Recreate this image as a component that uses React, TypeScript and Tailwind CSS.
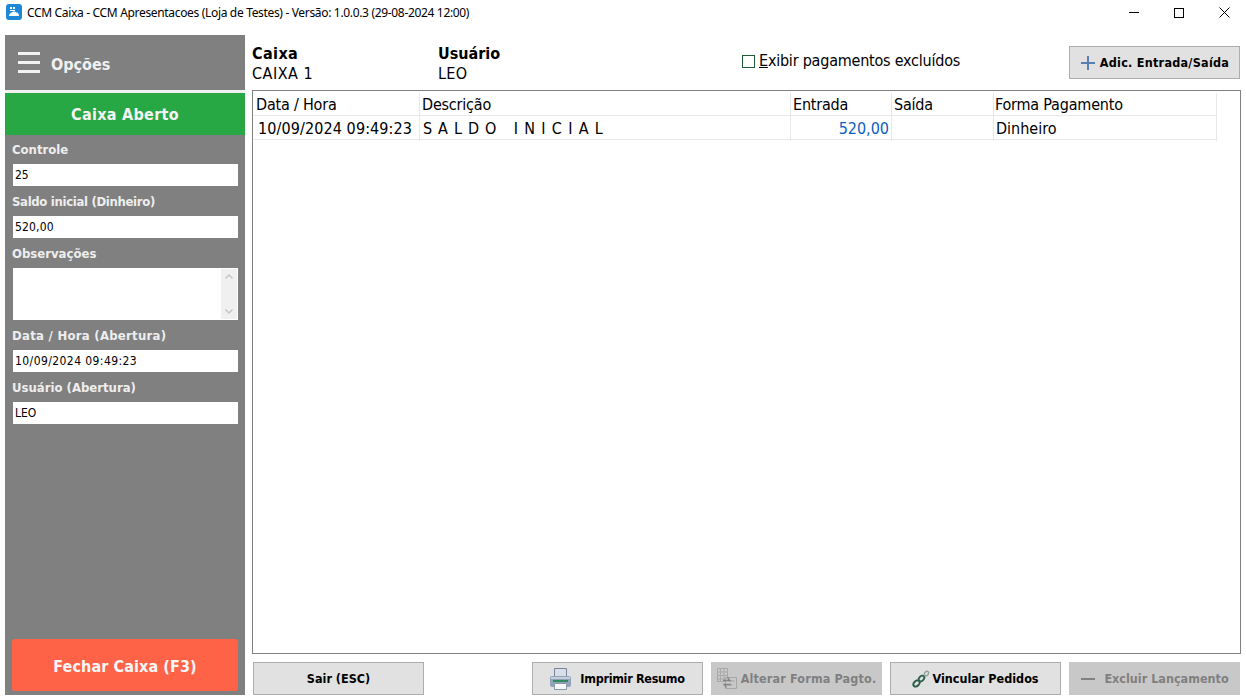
const font = "[font-family:'DejaVu_Sans_Condensed','DejaVu_Sans',sans-serif]"
const columns = 'grid w-[963px] grid-cols-[166px_371px_101px_102px_223px]'

function Field({
  label,
  value,
  labelClass,
  valueClass,
}: {
  label: string
  value: string
  labelClass?: string
  valueClass?: string
}) {
  return (
    <div className="flex flex-col">
      <div className={`h-[30px] pl-[7px] pt-[6px] text-[13px] font-bold leading-[20px] text-[#eeeeee] ${labelClass ?? ''}`}>
        {label}
      </div>
      <div className={`ml-[8px] mr-[7px] h-[22px] bg-white pl-[2px] text-[12px] leading-[22px] text-black ${valueClass ?? ''}`}>
        {value}
      </div>
    </div>
  )
}

function PrinterIcon() {
  return (
    <svg width="21" height="24" viewBox="0 0 21 24" className="shrink-0">
      <path d="M4.5 1.5h12v8h-12z" fill="#d9dee8" stroke="#75849b" />
      <path d="M2 9h17a2 2 0 0 1 2 2v7a2 2 0 0 1-2 2H2a2 2 0 0 1-2-2v-7a2 2 0 0 1 2-2z" fill="#93a3ba" />
      <path d="M1 10h19v2H1z" fill="#c6cfdc" />
      <path d="M3 13h15v2H3z" fill="#2f8a62" />
      <path d="M4.5 16.5h12v6h-12z" fill="#f5f7f9" stroke="#8a97aa" />
    </svg>
  )
}

function SwapIcon() {
  return (
    <svg width="20" height="22" viewBox="0 0 20 22" className="shrink-0" fill="none">
      <path d="M.5.5h10v13H.5zM3.5.5v13M7 .5v13M.5 4h10M.5 7.5h10M.5 11h10" stroke="#a9a9a9" />
      <path d="M8.5 9.5h11v11h-11z" fill="#c8c8c8" stroke="#a6a6a6" />
      <path d="M11.5 13h6M15.5 17h-6" stroke="#a6a6a6" />
      <path d="M6 12.5h7l-2.5-3M14 16.5H7l2.5 3" stroke="#858585" strokeWidth="1.3" />
    </svg>
  )
}

function LinkIcon() {
  return (
    <svg width="18" height="18" viewBox="0 0 18 18" className="shrink-0" fill="none">
      <ellipse cx="4.5" cy="13.5" rx="3.5" ry="2.5" transform="rotate(-45 4.5 13.5)" stroke="#2c5c48" strokeWidth="1.9" />
      <ellipse cx="9.5" cy="8.5" rx="3.2" ry="2.3" transform="rotate(-45 9.5 8.5)" stroke="#2f6450" strokeWidth="1.9" />
      <ellipse cx="14.5" cy="3.5" rx="2.4" ry="1.9" transform="rotate(-45 14.5 3.5)" stroke="#8da398" strokeWidth="1.4" />
    </svg>
  )
}

function FooterButton({
  children,
  disabled,
  className,
}: {
  children: React.ReactNode
  disabled?: boolean
  className?: string
}) {
  return (
    <div
      className={`flex h-[33px] w-[171px] items-center justify-center border pt-px text-[12.5px] font-bold ${
        disabled
          ? 'border-[#c8c8c8] bg-[#c8c8c8] text-[#808080]'
          : 'border-[#adadad] bg-[#e1e1e1] text-black'
      } ${className ?? ''}`}
    >
      {children}
    </div>
  )
}

export default function App() {
  return (
    <div className={`flex h-[700px] w-[1246px] flex-col overflow-hidden bg-white ${font}`}>
      {/* title bar */}
      <div className="flex h-[35px] shrink-0 items-start">
        <div className="ml-[6px] mt-[4px] flex h-[16px] w-[16px] items-center justify-center rounded-[3px] bg-[#1e88d8]">
          <svg width="12" height="12" viewBox="0 0 12 12">
            <path d="M2 1h2v2H2zM5 1h2v2H5zM2 4h5v1H2z" fill="#ffffff" />
            <path d="M1 10c0-2 1.5-3.5 3-3.5.5-1 3-1.5 4.5 0 1.5 0 2.5 1.5 2.5 3.5z" fill="#ffffff" />
          </svg>
        </div>
        <div className="ml-[5px] mt-[4px] font-['Noto_Sans'] text-[12px] leading-[17px] tracking-[-0.33px] text-black">
          CCM Caixa - CCM Apresentacoes (Loja de Testes) - Versão: 1.0.0.3 (29-08-2024 12:00)
        </div>
        <div className="ml-auto flex items-center pr-[16px] pt-[7px]">
          <div className="h-px w-[10px] bg-black" />
          <div className="ml-[35px] h-[10px] w-[10px] border border-black" />
          <svg width="11" height="11" viewBox="0 0 11 11" className="ml-[35px]">
            <path d="M.5.5l10 10M10.5.5l-10 10" stroke="#000" fill="none" />
          </svg>
        </div>
      </div>

      <div className="flex min-h-0 flex-1 pb-[5px] pl-[5px]">
        {/* side panel */}
        <div className="flex w-[240px] shrink-0 flex-col bg-[#808080]">
          <div className="flex h-[55px] items-center gap-[11px] pl-[13px]">
            <div className="flex w-[22px] flex-col gap-[6px]">
              <div className="h-[3px] bg-[#f2f2f2]" />
              <div className="h-[3px] bg-[#f2f2f2]" />
              <div className="h-[3px] bg-[#f2f2f2]" />
            </div>
            <span className="pt-[5px] text-[16px] font-bold text-[#f0f0f0]">Opções</span>
          </div>
          <div className="h-[3px] bg-[#f0f0f0]" />
          <div className="flex h-[42px] items-center justify-center bg-[#28a745] pt-[1px] text-[16px] font-bold tracking-[0.3px] text-[#f4f4f4]">
            Caixa Aberto
          </div>
          <div className="-mt-px flex flex-col">
            <Field label="Controle" value="25" />
            <Field label="Saldo inicial (Dinheiro)" value="520,00" labelClass="tracking-[-0.33px]" valueClass="tracking-[0.15px]" />
            <div className="flex flex-col">
              <div className="h-[30px] pl-[7px] pt-[6px] text-[13px] font-bold leading-[20px] text-[#eeeeee]">
                Observações
              </div>
              <div className="ml-[8px] mr-[7px] flex h-[52px] justify-end bg-white p-px">
                <div className="flex w-[16px] flex-col items-center justify-between bg-[#f0f0f0] py-[5px]">
                  <svg width="8" height="5" viewBox="0 0 8 5">
                    <path d="M.5 4.5L4 1l3.5 3.5" stroke="#c4c4c4" strokeWidth="1.4" fill="none" />
                  </svg>
                  <svg width="8" height="5" viewBox="0 0 8 5">
                    <path d="M.5.5L4 4 7.5.5" stroke="#c4c4c4" strokeWidth="1.4" fill="none" />
                  </svg>
                </div>
              </div>
            </div>
            <Field label="Data / Hora (Abertura)" value="10/09/2024 09:49:23" labelClass="tracking-[0.27px]" valueClass="tracking-[0.42px]" />
            <Field label="Usuário (Abertura)" value="LEO" />
          </div>
          <div className="mx-[7px] mb-[4px] mt-auto flex h-[52px] items-center justify-center rounded-[3px] bg-[#ff6347] pt-[4px] text-[16px] font-bold tracking-[0.1px] text-[#f7f7f7]">
            Fechar Caixa (F3)
          </div>
        </div>

        {/* main area */}
        <div className="flex min-w-0 flex-1 flex-col pl-[7px] pr-[5px]">
          <div className="flex h-[55px] shrink-0 items-start">
            <div className="w-[186px] pt-[9px] text-[16px] leading-[20px] text-black">
              <div className="font-bold tracking-[0.4px]">Caixa</div>
              <div className="tracking-[0.5px]">CAIXA 1</div>
            </div>
            <div className="w-[304px] pt-[9px] text-[16px] leading-[20px] text-black">
              <div className="font-bold">Usuário</div>
              <div className="tracking-[0.3px]">LEO</div>
            </div>
            <div className="flex items-center pt-[16px] text-[16px] leading-[20px] tracking-[-0.22px] text-black">
              <div className="h-[13px] w-[13px] border border-[#1f5c3a]" />
              <span className="ml-[4px]">
                <span className="underline">E</span>xibir pagamentos excluídos
              </span>
            </div>
            <div className="ml-auto mr-[1px] mt-[11px] flex h-[33px] w-[171px] items-center justify-center gap-[4px] border border-[#adadad] bg-[#e1e1e1] pt-px text-[12.5px] font-bold tracking-[0.25px] text-black">
              <svg width="16" height="16" viewBox="0 0 16 16" className="shrink-0">
                <path d="M8 1v14M1 8h14" stroke="#5b7fb5" strokeWidth="2" fill="none" />
              </svg>
              Adic. Entrada/Saída
            </div>
          </div>

          <div className="min-h-0 flex-1 border border-[#808080] bg-white pl-px pt-px">
            <div className={`${columns} h-[24px] border-b border-[#e8e8e8] pt-px text-[16px] leading-[24px] tracking-[-0.2px] text-black`}>
              <div className="border-r border-[#e8e8e8] pl-[2px]">Data / Hora</div>
              <div className="border-r border-[#e8e8e8] pl-[2px]">Descrição</div>
              <div className="border-r border-[#e8e8e8] pl-[2px]">Entrada</div>
              <div className="border-r border-[#e8e8e8] pl-[2px]">Saída</div>
              <div className="border-r border-[#e8e8e8] pl-[1px]">Forma Pagamento</div>
            </div>
            <div className={`${columns} h-[24px] border-b border-[#e8e8e8] pt-px text-[16px] leading-[24px] text-black`}>
              <div className="border-r border-[#e8e8e8] pl-[4px] tracking-[0.1px]">10/09/2024 09:49:23</div>
              <div className="whitespace-pre border-r border-[#e8e8e8] pl-[3px] tracking-[0.7px]">
                {'S A L D O   '}
                <span className="ml-[1px] tracking-[0.85px]">I N I C I A L</span>
              </div>
              <div className="border-r border-[#e8e8e8] pr-[2px] text-right text-[#0b5fc0]">520,00</div>
              <div className="border-r border-[#e8e8e8]" />
              <div className="border-r border-[#e8e8e8] pl-[2px]">Dinheiro</div>
            </div>
          </div>

          <div className="flex h-[41px] shrink-0 items-end pl-px">
            <FooterButton>Sair (ESC)</FooterButton>
            <FooterButton className="ml-[108px] gap-[9px] tracking-[-0.3px]">
              <PrinterIcon />
              Imprimir Resumo
            </FooterButton>
            <FooterButton disabled className="ml-[8px] gap-[4px] tracking-[0.15px]">
              <SwapIcon />
              Alterar Forma Pagto.
            </FooterButton>
            <FooterButton className="ml-[8px] gap-[2px]">
              <LinkIcon />
              Vincular Pedidos
            </FooterButton>
            <FooterButton disabled className="ml-[8px] gap-[8px]">
              <svg width="16" height="16" viewBox="0 0 16 16" className="shrink-0">
                <path d="M1 8h14" stroke="#808080" strokeWidth="2" fill="none" />
              </svg>
              Excluir Lançamento
            </FooterButton>
          </div>
        </div>
      </div>
    </div>
  )
}
